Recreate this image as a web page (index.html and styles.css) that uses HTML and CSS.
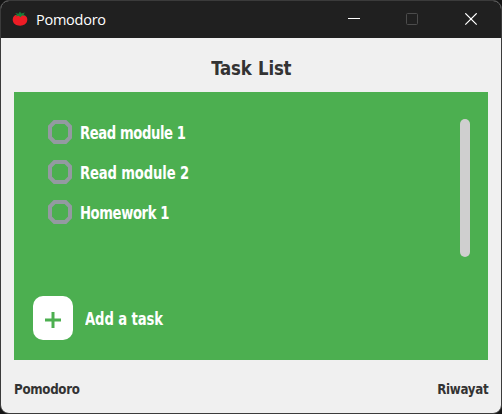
FILE: index.html
```html
<!DOCTYPE html>
<html lang="en">
<head>
<meta charset="utf-8">
<title>Pomodoro</title>
<link rel="stylesheet" href="styles.css">
</head>
<body>
<div class="window">
  <header class="titlebar">
    <svg class="logo" width="16" height="16" viewBox="0 0 16 16">
      <path d="M.7 8.500C.7 5 3.400 3.300 6 3.800 8 3.200 10.500 3 12.500 4.200c2.200 1 3 2.800 2.800 4.900-.3 3.600-3.300 5.600-7.200 5.600C3.700 14.700.7 12.300.7 8.500z" fill="#ee1c25"/>
      <path d="M3.200 2l3.300.7L8 .6l1.200 1.900 3.800-1-1.500 1.700 2.200 1.900-3.700-.5-1.500 1.600-1.800-1.500-3.200.8 1.500-1.800z" fill="#16803a"/>
    </svg>
    <span class="caption">Pomodoro</span>
    <svg class="controls" width="130" height="14" viewBox="0 0 130 14" fill="none">
      <path d="M0 5.500h12" stroke="#fff"/>
      <rect x="58.500" y=".5" width="11" height="11" rx="1" stroke="#4c4c4c"/>
      <path d="M117.300 .3l11.400 11.400M128.700 .3l-11.400 11.400" stroke="#fff" stroke-width="1.200"/>
    </svg>
  </header>
  <main class="content">
    <h1 class="title"><span class="text heading">Task List</span></h1>
    <section class="panel">
      <div class="scroll-area">
        <ul class="tasks">
          <li class="task"><svg class="check" viewBox="0 0 24 24"><path d="M6.500 2h11L22 6.500v11L17.500 22h-11L2 17.500v-11z"/></svg><span class="text read first">Read module 1</span></li>
          <li class="task"><svg class="check" viewBox="0 0 24 24"><path d="M6.500 2h11L22 6.500v11L17.500 22h-11L2 17.500v-11z"/></svg><span class="text read">Read module 2</span></li>
          <li class="task"><svg class="check" viewBox="0 0 24 24"><path d="M6.500 2h11L22 6.500v11L17.500 22h-11L2 17.500v-11z"/></svg><span class="text home">Homework 1</span></li>
        </ul>
        <div class="scrollbar"></div>
      </div>
      <div class="add-row">
        <button class="add" aria-label="Add"><svg width="16" height="16" viewBox="0 0 16 16"><path d="M0 8h16M8 0v16" stroke="#4caf50" stroke-width="3"/></svg></button>
        <span class="text add-label">Add a task</span>
      </div>
    </section>
    <footer class="footer"><span class="text owner">Pomodoro</span><span class="text author">Riwayat</span></footer>
  </main>
</div>
</body>
</html>
```
FILE: styles.css
```css
* { box-sizing: border-box; }
body { margin: 0; background: #151515; }
.window {
  width: 502px; height: 414px;
  display: flex; flex-direction: column;
  border: 1px solid #3b3b3b; border-radius: 9px;
  overflow: hidden; background: #f0f0f0;
}
.titlebar {
  height: 37px; flex: none;
  display: flex; align-items: center;
  padding: 0 23px 0 11px;
  background: #202020; color: #fff;
}
.logo { margin-bottom: 1px; }
.caption { margin-left: 8px; font: 14.5px/20px "Open Sans", sans-serif; letter-spacing: -.25px; }
.controls { margin-left: auto; }
.content { flex: 1; display: flex; flex-direction: column; padding: 0 13px; }
.text {
  display: inline-block;
  font-family: "DejaVu Sans Condensed", "DejaVu Sans", sans-serif;
  font-stretch: condensed; font-weight: bold; white-space: nowrap;
  transform: scaleX(.86); transform-origin: left;
}
.title { margin: 0; height: 54px; padding-top: 17px; text-align: center; line-height: 26px; font-size: 19px; color: #333; }
.heading { letter-spacing: -.2px; word-spacing: 1px; transform: scaleX(.97); transform-origin: center; }
.panel { height: 268px; display: flex; flex-direction: column; background: #4caf50; color: #fff; padding: 27px 18px 20px 19px; }
.scroll-area { display: flex; justify-content: space-between; height: 138px; }
.tasks { list-style: none; margin: 0; padding: 1px 0 0 15px; display: flex; flex-direction: column; gap: 16px; }
.task { height: 24px; display: flex; align-items: center; gap: 8px; font-size: 17px; line-height: 24px; }
.task .text { padding-top: 2px; }
.read { letter-spacing: -.15px; }
.first { letter-spacing: -.45px; }
.home { letter-spacing: -.45px; }
.check { width: 24px; height: 24px; fill: none; stroke: #949aa1; stroke-width: 4; }
.scrollbar { width: 10px; border-radius: 5px; background: #cfcfcf; }
.add-row { display: flex; align-items: center; gap: 12px; margin-top: auto; font-size: 17px; }
.add { width: 40px; height: 44px; padding: 4px 0 0; border: 0; border-radius: 10px; background: #fff; display: grid; place-items: center; }
.add-label { padding-top: 1px; letter-spacing: -.1px; }
.footer { flex: 1; display: flex; justify-content: space-between; padding-top: 20px; font-size: 14px; line-height: 18px; color: #333; }
.owner { letter-spacing: -.3px; transform: scaleX(.94); }
.author { letter-spacing: -.3px; transform: scaleX(.94); transform-origin: right; }
```
